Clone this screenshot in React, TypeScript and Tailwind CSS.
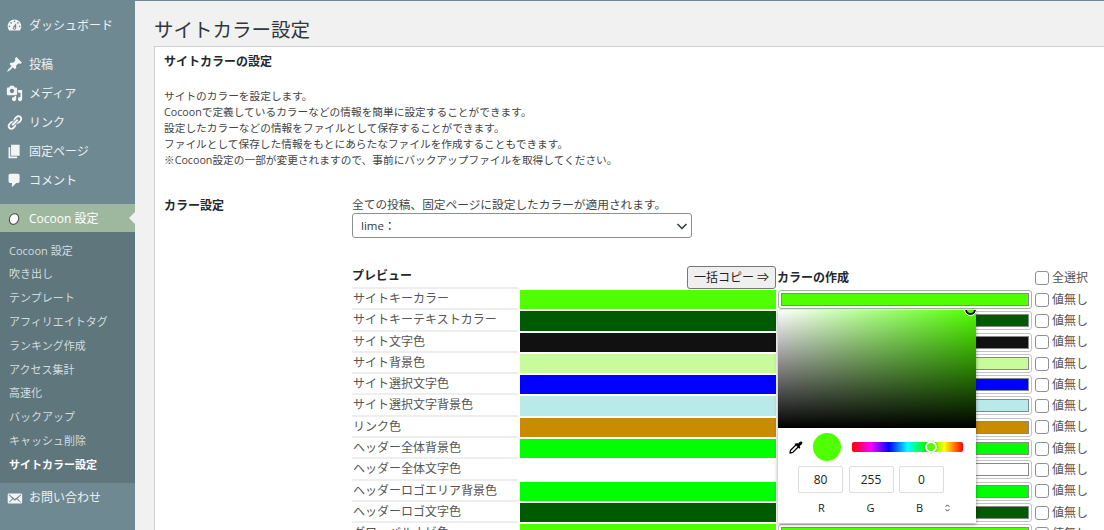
import React from 'react';

const paths: Record<string, string> = {
  dashboard:
    'M3.76 16h12.48c1.1-1.37 1.76-3.11 1.76-5 0-4.42-3.58-8-8-8s-8 3.58-8 8c0 1.89.66 3.63 1.76 5zM10 4c.55 0 1 .45 1 1s-.45 1-1 1-1-.45-1-1 .45-1 1-1zM6 6c.55 0 1 .45 1 1s-.45 1-1 1-1-.45-1-1 .45-1 1-1zm8 0c.55 0 1 .45 1 1s-.45 1-1 1-1-.45-1-1 .45-1 1-1zm-5.37 5.55L12 7v6c0 1.1-.9 2-2 2s-2-.9-2-2c0-.57.24-1.08.63-1.45zM4 10c.55 0 1 .45 1 1s-.45 1-1 1-1-.45-1-1 .45-1 1-1zm12 0c.55 0 1 .45 1 1s-.45 1-1 1-1-.45-1-1 .45-1 1-1zm-5 3c0-.55-.45-1-1-1s-1 .45-1 1 .45 1 1 1 1-.45 1-1z',
  post: 'M10.44 3.02l1.82-1.82 6.36 6.35-1.83 1.82c-1.05-.68-2.48-.57-3.41.36l-.75.75c-.92.93-1.04 2.35-.35 3.41l-1.83 1.82-2.41-2.41-2.8 2.79c-.42.42-3.38 2.71-3.8 2.29s1.86-3.39 2.28-3.81l2.79-2.79L4.1 9.36l1.83-1.82c1.05.69 2.48.57 3.4-.36l.75-.75c.93-.92 1.05-2.35.36-3.41z',
  media:
    'M13 11V4c0-.55-.45-1-1-1h-1.67L9 1H5L3.67 3H2c-.55 0-1 .45-1 1v7c0 .55.45 1 1 1h10c.55 0 1-.45 1-1zM7 4.5c1.38 0 2.5 1.12 2.5 2.5S8.38 9.5 7 9.5 4.5 8.38 4.5 7 5.62 4.5 7 4.5zM14 6h5v10.5c0 1.38-1.12 2.5-2.5 2.5S14 17.88 14 16.5s1.12-2.5 2.5-2.5c.17 0 .34.02.5.05V9h-3V6zm-4 8.05V13h2v3.5c0 1.38-1.12 2.5-2.5 2.5S7 17.88 7 16.5 8.12 14 9.5 14c.17 0 .34.02.5.05z',
  link: 'M17.74 2.76c1.68 1.69 1.68 4.41 0 6.1l-1.53 1.52c-1.12 1.12-2.7 1.47-4.14 1.09l2.62-2.61.76-.77.76-.76c.84-.84.84-2.2 0-3.04-.84-.85-2.2-.85-3.04 0l-.77.76-3.38 3.38c-.37-1.44-.02-3.02 1.1-4.14l1.52-1.53c1.69-1.68 4.42-1.68 6.1 0zM8.59 13.43l5.34-5.34c.42-.42.42-1.1 0-1.52-.44-.43-1.13-.39-1.53 0l-5.33 5.34c-.42.42-.42 1.1 0 1.52.44.43 1.13.39 1.52 0zm-.76 2.29l4.14-4.15c.38 1.44.03 3.02-1.09 4.14l-1.52 1.53c-1.69 1.68-4.41 1.68-6.1 0-1.68-1.68-1.68-4.42 0-6.1l1.53-1.52c1.12-1.12 2.7-1.47 4.14-1.1l-4.14 4.15c-.85.84-.85 2.2 0 3.05.84.84 2.2.84 3.04 0z',
  page: 'M6 15V2h10v13H6zm-1 1h8v2H3V5h2v11z',
  comment: 'M5 2h9c1.1 0 2 .9 2 2v7c0 1.1-.9 2-2 2h-2l-5 5v-5H5c-1.1 0-2-.9-2-2V4c0-1.1.9-2 2-2z',
  mail: 'M19 14.5v-9c0-.83-.67-1.5-1.5-1.5H3.49c-.83 0-1.5.67-1.5 1.5v9c0 .83.67 1.5 1.5 1.5H17.5c.83 0 1.5-.67 1.5-1.5zm-1.31-9.11c.33.33.15.67-.03.84L13.6 9.95l3.9 4.06c.12.14.2.36.06.51-.13.16-.43.15-.56.05l-4.37-3.73-2.14 1.95-2.13-1.95-4.37 3.73c-.13.1-.43.11-.56-.05-.14-.15-.06-.37.06-.51l3.9-4.06-4.06-3.72c-.18-.17-.36-.51-.03-.84s.67-.17.95.07l6.24 5.04 6.25-5.04c.28-.24.62-.4.95-.07z',
};

function MenuIcon({ name }: { name: string }) {
  return (
    <svg viewBox="0 0 20 20" className="w-[17px] h-[17px] fill-[#f3f5f5] shrink-0">
      <path d={paths[name]} />
    </svg>
  );
}

function MenuItem({ icon, label }: { icon: string; label: string }) {
  return (
    <div className="h-[29px] pt-[2px] flex items-center pl-[6px] gap-[6px] text-[12px] text-[#eef1f2]">
      <MenuIcon name={icon} />
      <span>{label}</span>
    </div>
  );
}

const subMenu = [
  'Cocoon 設定',
  '吹き出し',
  'テンプレート',
  'アフィリエイトタグ',
  'ランキング作成',
  'アクセス集計',
  '高速化',
  'バックアップ',
  'キャッシュ削除',
];

function Sidebar() {
  return (
    <aside className="w-[135px] shrink-0 h-full overflow-hidden bg-[#6e8992]">
      <div className="pt-[10px]">
        <MenuItem icon="dashboard" label="ダッシュボード" />
      </div>
      <div className="pt-[10px]">
        <MenuItem icon="post" label="投稿" />
        <MenuItem icon="media" label="メディア" />
        <MenuItem icon="link" label="リンク" />
        <MenuItem icon="page" label="固定ページ" />
        <MenuItem icon="comment" label="コメント" />
      </div>
      <div className="relative mt-[10px] h-[28px] pt-[1px] flex items-center pl-[9px] gap-[10px] bg-[#9db89f] text-[12px] text-white">
        <span className="w-[10px] h-[12px] rounded-[50%] bg-white border border-[#444] rotate-[25deg]" />
        <span>Cocoon 設定</span>
        <span className="absolute right-0 top-[8px] border-y-[6px] border-r-[6px] border-y-transparent border-r-[#f1f1f1]" />
      </div>
      <div className="bg-[#5f767d] pt-[7px] pb-[6px]">
        {subMenu.map((label) => (
          <div key={label} className="h-[23.8px] flex items-center pl-[9px] text-[11px] text-[#d3dcdf]">
            {label}
          </div>
        ))}
        <div className="h-[23.8px] flex items-center pl-[9px] text-[11px] font-bold text-white">サイトカラー設定</div>
      </div>
      <MenuItem icon="mail" label="お問い合わせ" />
      <div className="mt-[9px]">
        <MenuItem icon="dashboard" label="" />
      </div>
    </aside>
  );
}

const rows = [
  { label: 'サイトキーカラー', color: 'bg-[#50ff00]' },
  { label: 'サイトキーテキストカラー', color: 'bg-[#005a00]' },
  { label: 'サイト文字色', color: 'bg-[#111111]' },
  { label: 'サイト背景色', color: 'bg-[#c8fb9b]' },
  { label: 'サイト選択文字色', color: 'bg-[#0000ff]' },
  { label: 'サイト選択文字背景色', color: 'bg-[#b9eaea]' },
  { label: 'リンク色', color: 'bg-[#c98c00]' },
  { label: 'ヘッダー全体背景色', color: 'bg-[#00ff00]' },
  { label: 'ヘッダー全体文字色', color: 'bg-white' },
  { label: 'ヘッダーロゴエリア背景色', color: 'bg-[#00ff00]' },
  { label: 'ヘッダーロゴ文字色', color: 'bg-[#005a00]' },
  { label: 'グローバルナビ色', color: 'bg-[#50ff00]' },
];

function Check({ label }: { label: string }) {
  return (
    <label className="flex items-center gap-[3px] ml-[3px] text-[12px] text-[#555]">
      <span className="w-[14px] h-[14px] rounded-[3px] border border-[#8c8f94] bg-white shrink-0" />
      <span>{label}</span>
    </label>
  );
}

function ColorRow({ label, color, focused }: { label: string; color: string; focused: boolean }) {
  return (
    <div className="flex h-[21.3px]">
      <div className="w-[166px] shrink-0 border-b-2 border-[#eeeeee] pl-[1px] text-[12px] leading-[20px] text-[#555]">
        {label}
      </div>
      <div className={`w-[256px] shrink-0 ml-[2px] mt-[1px] mb-[1px] ${color}`} />
      <div
        className={`w-[254px] shrink-0 ml-[2px] mt-[1px] h-[19px] p-[2px] rounded-[3px] border ${
          focused ? 'border-[#9db89f]' : 'border-[#c4c4c4]'
        }`}
      >
        <div className={`h-full border border-[#888] ${color}`} />
      </div>
      <Check label="値無し" />
    </div>
  );
}

function ColorPicker() {
  return (
    <div className="absolute left-[426px] top-[114px] w-[198px] h-[213px] bg-white shadow-[0_1px_4px_rgba(0,0,0,0.4)] overflow-hidden">
      <div className="relative h-[118px] bg-[linear-gradient(to_top,#000,transparent),linear-gradient(to_right,#fff,#50ff00)]">
        <span className="absolute right-0 -top-[6px] w-[11px] h-[11px] rounded-full bg-[#50ff00] border-2 border-black outline outline-white" />
      </div>
      <div className="flex items-center h-[38px] pl-[11px]">
        <svg viewBox="0 0 14 14" className="w-[14px] h-[14px] shrink-0">
          <path d="M8.2 3.6L1.6 10.2 1 13l2.8-.6 6.6-6.6z" fill="#fff" stroke="#000" strokeWidth="1.3" strokeLinejoin="round" />
          <path d="M7 3.4L8.6 4.2 10.1 2.6C11 1.5 12.2 1 13 1.8s.3 2-.8 2.9L10.6 6.2l.7 1.6-1 .9-5-5z" fill="#000" />
        </svg>
        <span className="ml-[10px] w-[28px] h-[28px] rounded-full bg-[#50ff00]" />
        <span className="relative ml-[11px] w-[111px] h-[10px] rounded-[2px] bg-[linear-gradient(to_right,#f00,#f0f,#00f,#0ff,#0f0,#ff0,#f00)]">
          <span className="absolute left-[73px] -top-[1px] w-[12px] h-[12px] rounded-full bg-[#50ff00] border-2 border-white shadow-[0_0_2px_rgba(0,0,0,0.4)]" />
        </span>
      </div>
      <div className="flex pl-[20px] text-[12px] text-[#222]">
        {['80', '255', '0'].map((value, i) => (
          <div key={i} className="w-[45px] h-[27px] mr-[5.5px] flex items-center justify-center border border-[#dddddd] rounded-[2px]">
            {value}
          </div>
        ))}
      </div>
      <div className="flex items-center pl-[21px] pt-[7px] text-[11px] text-[#222]">
        {['R', 'G', 'B'].map((value) => (
          <div key={value} className="w-[45px] mr-[4px] text-center font-medium">
            {value}
          </div>
        ))}
        <svg viewBox="0 0 8 12" className="-ml-[1px] w-[5px] h-[8px] fill-none stroke-[#333] stroke-[1.5]">
          <path d="M1 4l3-3 3 3M1 8l3 3 3-3" />
        </svg>
      </div>
    </div>
  );
}

export default function App() {
  return (
    <div className="flex w-[1104px] h-[530px] overflow-hidden bg-[#f1f1f1] font-['Open_Sans','Noto_Sans_CJK_JP',sans-serif]">
      <Sidebar />
      <main className="flex-1 min-w-0 border-t border-[#6e8992] pl-[19px]">
        <h1 className="h-[45px] pt-[14px] text-[19.5px] leading-[30px] text-[#32373c]">サイトカラー設定</h1>
        <section className="w-[980px] h-[600px] bg-white border border-[#ccd0d4] pl-[9px] pt-[7px]">
          <h3 className="text-[12px] leading-4 font-bold text-[#23282d]">サイトカラーの設定</h3>
          <div className="mt-[18px] text-[10.7px] leading-4 text-[#444]">
            <p>サイトのカラーを設定します。</p>
            <p>Cocoonで定義しているカラーなどの情報を簡単に設定することができます。</p>
            <p>設定したカラーなどの情報をファイルとして保存することができます。</p>
            <p>ファイルとして保存した情報をもとにあらたなファイルを作成することもできます。</p>
            <p>※Cocoon設定の一部が変更されますので、事前にバックアップファイルを取得してください。</p>
          </div>
          <div className="mt-[28px] flex">
            <div className="w-[188px] shrink-0 text-[12px] leading-[20px] font-bold text-[#23282d]">カラー設定</div>
            <div className="relative flex-1">
              <p className="text-[11.7px] leading-4 text-[#444]">全ての投稿、固定ページに設定したカラーが適用されます。</p>
              <div className="mt-[1px] w-[340px] h-[25px] flex items-center justify-between pl-[8px] pr-[3px] rounded-[3px] border border-[#8c8f94] bg-white text-[11.5px] text-[#32373c]">
                <span>lime：</span>
                <svg viewBox="0 0 12 12" className="w-3 h-3 fill-none stroke-[#32373c] stroke-[1.5]">
                  <path d="M1.5 4l4.5 4.5L10.5 4" />
                </svg>
              </div>
              <div className="mt-[28px] flex h-[23px] text-[12px]">
                <div className="w-[166px] shrink-0 border-b-2 border-[#eeeeee] leading-[20px] font-bold text-[#23282d]">プレビュー</div>
                <div className="w-[169px] shrink-0" />
                <button className="w-[89px] h-[23px] shrink-0 rounded-[3px] border border-[#777] bg-[#efefef] text-[12px] text-[#222]">
                  一括コピー ⇒
                </button>
                <div className="w-[256px] shrink-0 pl-[1px] leading-[24px] font-bold text-[#23282d]">カラーの作成</div>
                <Check label="全選択" />
              </div>
              {rows.map((row, i) => (
                <ColorRow key={row.label} label={row.label} color={row.color} focused={i === 0} />
              ))}
              <ColorPicker />
            </div>
          </div>
        </section>
      </main>
    </div>
  );
}
